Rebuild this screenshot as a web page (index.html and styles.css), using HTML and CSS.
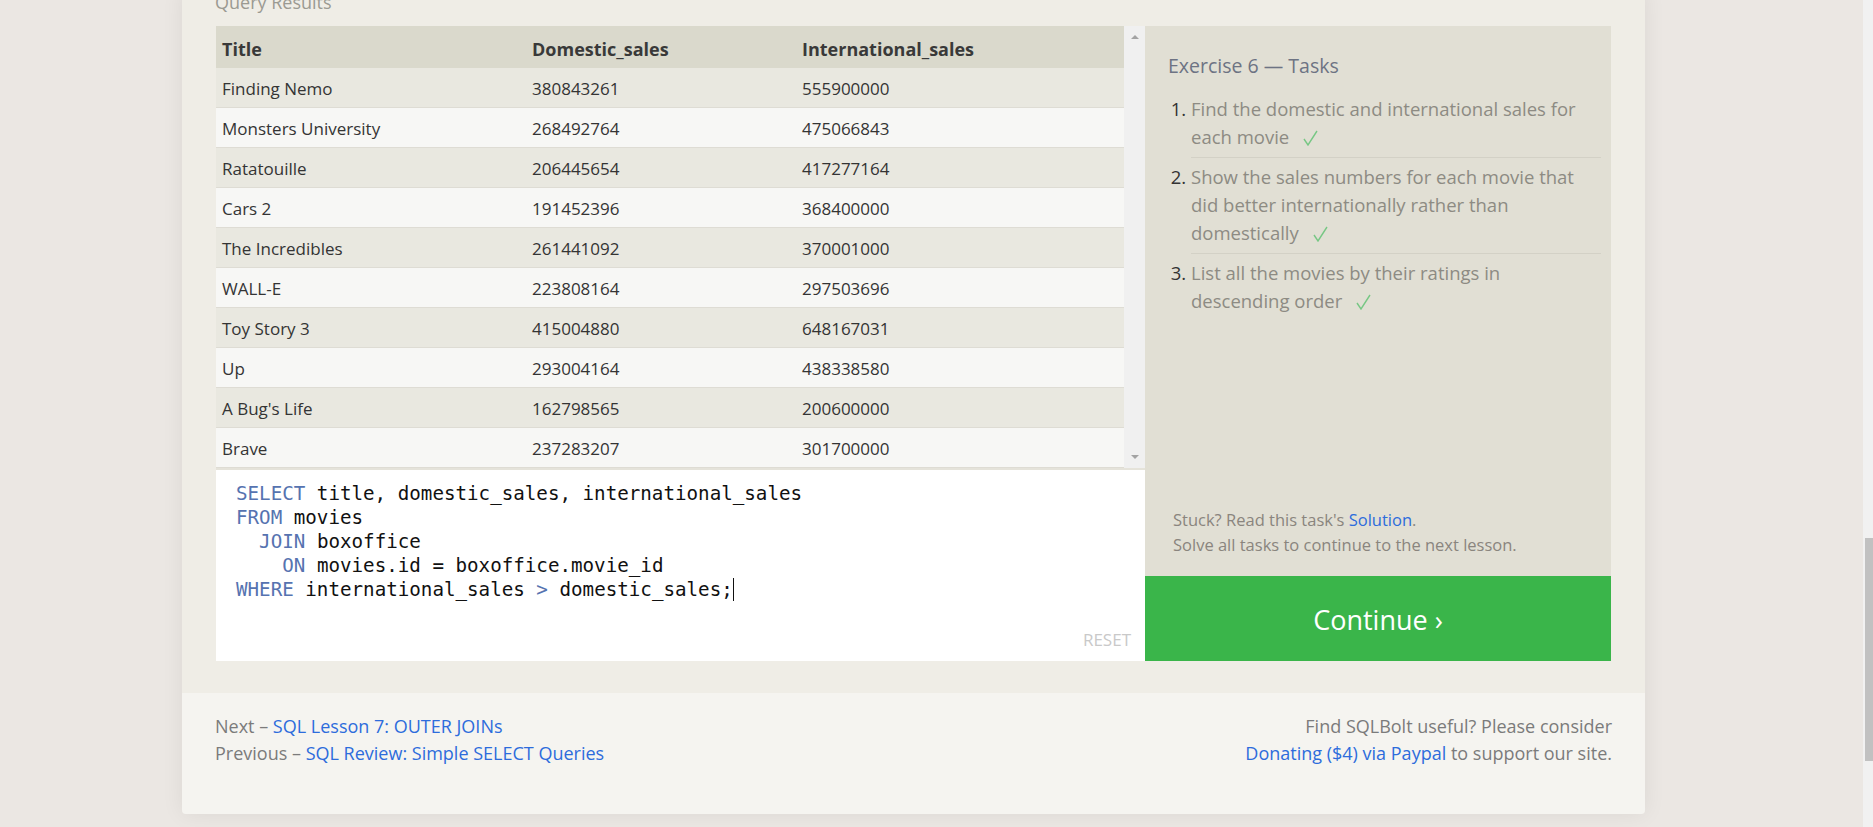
FILE: index.html
```html
<!DOCTYPE html>
<html lang="en">
<head>
<meta charset="utf-8">
<title>SQLBolt - Exercise 6</title>
<link rel="stylesheet" href="styles.css">
</head>
<body>
<div class="lesson">
  <section class="exercise">
    <div class="results-label">Query Results</div>
    <div class="exercise-row">
      <div class="work-col">
        <div class="results">
          <table class="results-table">
            <colgroup><col class="c-title"><col class="c-dom"><col class="c-int"></colgroup>
            <thead>
              <tr><th>Title</th><th>Domestic_sales</th><th>International_sales</th></tr>
            </thead>
            <tbody>
              <tr><td>Finding Nemo</td><td>380843261</td><td>555900000</td></tr>
              <tr><td>Monsters University</td><td>268492764</td><td>475066843</td></tr>
              <tr><td>Ratatouille</td><td>206445654</td><td>417277164</td></tr>
              <tr><td>Cars 2</td><td>191452396</td><td>368400000</td></tr>
              <tr><td>The Incredibles</td><td>261441092</td><td>370001000</td></tr>
              <tr><td>WALL-E</td><td>223808164</td><td>297503696</td></tr>
              <tr><td>Toy Story 3</td><td>415004880</td><td>648167031</td></tr>
              <tr><td>Up</td><td>293004164</td><td>438338580</td></tr>
              <tr><td>A Bug's Life</td><td>162798565</td><td>200600000</td></tr>
              <tr><td>Brave</td><td>237283207</td><td>301700000</td></tr>
            </tbody>
          </table>
          <div class="vscroll"><span class="arrow arrow-up"></span><span class="arrow arrow-down"></span></div>
        </div>
        <div class="editor">
          <div class="code">
            <div class="code-line"><span class="kw">SELECT</span> title, domestic_sales, international_sales</div>
            <div class="code-line"><span class="kw">FROM</span> movies</div>
            <div class="code-line">  <span class="kw">JOIN</span> boxoffice</div>
            <div class="code-line">    <span class="kw">ON</span> movies.id = boxoffice.movie_id</div>
            <div class="code-line"><span class="kw">WHERE</span> international_sales <span class="kw">&gt;</span> domestic_sales;<span class="cursor"></span></div>
          </div>
          <span class="reset">RESET</span>
        </div>
      </div>
      <div class="task-col">
        <div class="tasks">
          <h3 class="tasks-title">Exercise 6 — Tasks</h3>
          <ol class="task-list">
            <li>Find the domestic and international sales for each movie<svg class="check" width="15" height="16" viewBox="0 0 15 16"><polyline points="1,9 5,15 14,1" fill="none" stroke="#77c784" stroke-width="1.4"/></svg></li>
            <li>Show the sales numbers for each movie that did better internationally rather than domestically<svg class="check" width="15" height="16" viewBox="0 0 15 16"><polyline points="1,9 5,15 14,1" fill="none" stroke="#77c784" stroke-width="1.4"/></svg></li>
            <li class="last">List all the movies by their ratings in descending order<svg class="check" width="15" height="16" viewBox="0 0 15 16"><polyline points="1,9 5,15 14,1" fill="none" stroke="#77c784" stroke-width="1.4"/></svg></li>
          </ol>
          <div class="stuck">
            <div>Stuck? Read this task's <a class="link" href="#">Solution</a>.</div>
            <div>Solve all tasks to continue to the next lesson.</div>
          </div>
        </div>
        <a class="continue" href="#">Continue ›</a>
      </div>
    </div>
  </section>
  <footer class="lesson-footer">
    <div class="nav-links">
      <div>Next – <a class="link" href="#">SQL Lesson 7: OUTER JOINs</a></div>
      <div>Previous – <a class="link" href="#">SQL Review: Simple SELECT Queries</a></div>
    </div>
    <div class="donate">
      <div>Find SQLBolt useful? Please consider</div>
      <div><a class="link" href="#">Donating ($4) via Paypal</a> to support our site.</div>
    </div>
  </footer>
</div>
<div class="page-scrollbar"><div class="page-thumb"></div></div>
</body>
</html>
```

FILE: styles.css
```css
html, body {
  margin: 0;
  padding: 0;
  height: 100%;
  overflow: hidden;
}

body {
  background: #ebe7e3;
  font-family: "Open Sans", "Noto Sans", sans-serif;
  color: #333;
}

.lesson {
  margin-left: 182px;
  width: 1463px;
  box-shadow: 0 0 22px rgba(0, 0, 0, 0.07);
  border-radius: 0 0 4px 4px;
}

.exercise {
  background: #efede6;
  padding: 0 34px 32px 34px;
}

.results-label {
  font-size: 18px;
  line-height: 24px;
  color: #9b9a92;
  margin: -10px 0 12px -1px;
}

.exercise-row {
  display: flex;
}

.work-col {
  width: 929px;
  display: flex;
  flex-direction: column;
}

.results {
  display: flex;
  height: 442px;
}

.results-table {
  width: 908px;
  table-layout: fixed;
  border-collapse: collapse;
  font-size: 17px;
}

.c-title { width: 310px; }
.c-dom { width: 270px; }
.c-int { width: 328px; }

.results-table th {
  background: #dad9cc;
  height: 42px;
  box-sizing: border-box;
  padding: 3px 0 0 6px;
  text-align: left;
  font-weight: 700;
  font-size: 18px;
  color: #393939;
}

.results-table td {
  height: 39px;
  box-sizing: border-box;
  padding: 2px 0 0 6px;
  border-bottom: 1px solid #dedcd4;
  color: #343434;
}

.results-table tbody tr:nth-child(odd) td {
  background: #e9e8e0;
}

.results-table tbody tr:nth-child(even) td {
  background: #f7f7f5;
}

.vscroll {
  width: 21px;
  background: #f0f0f0;
  display: flex;
  flex-direction: column;
  align-items: center;
  justify-content: space-between;
  padding: 9px 0;
  box-sizing: border-box;
}

.arrow {
  width: 0;
  height: 0;
  border-left: 4.5px solid transparent;
  border-right: 4.5px solid transparent;
}

.arrow-up {
  border-bottom: 4.5px solid #a3a3a3;
}

.arrow-down {
  border-top: 4.5px solid #a3a3a3;
}

.editor {
  background: #fff;
  border-top: 2px solid #e5e3da;
  display: flex;
  flex-direction: column;
  padding: 12px 14px 9px 20px;
  height: 170px;
}

.code {
  font-family: "DejaVu Sans Mono", "Liberation Mono", monospace;
  font-size: 19.2px;
  line-height: 24px;
  color: #111;
}

.code-line {
  white-space: pre;
  height: 24px;
}

.kw {
  color: #5673b0;
}

.cursor {
  display: inline-block;
  width: 0;
  height: 23px;
  border-left: 1.6px solid #111;
  vertical-align: -5px;
}

.reset {
  margin-top: auto;
  align-self: flex-end;
  font-size: 17px;
  line-height: 24px;
  color: #c9c9c9;
}

.task-col {
  width: 466px;
  display: flex;
  flex-direction: column;
}

.tasks {
  background: #e1dfd4;
  height: 550px;
  box-sizing: border-box;
  padding: 26px 10px 0 23px;
  display: flex;
  flex-direction: column;
}

.tasks-title {
  margin: 0;
  font-size: 19.5px;
  line-height: 28px;
  font-weight: 400;
  color: #6d7383;
}

.task-list {
  margin: 10px 0 0 0;
  padding: 0 0 0 23px;
  font-size: 18.5px;
  line-height: 28px;
  color: #8d8b83;
}

.task-list li {
  padding: 5px 0 6px 0;
  border-bottom: 1px solid #d3d1c6;
}

.task-list li.last {
  border-bottom: none;
}

.task-list li::marker {
  color: #333;
}

.check {
  margin-left: 14px;
  vertical-align: -2px;
}

.stuck {
  margin-top: auto;
  margin-bottom: 19px;
  padding-left: 5px;
  font-size: 16.5px;
  line-height: 25px;
  color: #8a857e;
}

.link {
  color: #2d6cdc;
  text-decoration: none;
}

.continue {
  display: flex;
  align-items: center;
  justify-content: center;
  height: 85px;
  background: #3ab54a;
  color: #fff;
  font-size: 27px;
  text-decoration: none;
  padding-top: 2px;
  box-sizing: border-box;
}

.lesson-footer {
  background: #f5f4f0;
  height: 121px;
  box-sizing: border-box;
  padding: 20px 33px 0 33px;
  display: flex;
  justify-content: space-between;
  font-size: 18px;
  line-height: 27px;
  color: #7b7b7b;
  border-radius: 0 0 4px 4px;
}

.donate {
  text-align: right;
}

.page-scrollbar {
  position: fixed;
  top: 0;
  right: 0;
  width: 10px;
  height: 100%;
  background: #f1f1f1;
}

.page-thumb {
  position: absolute;
  top: 538px;
  left: 2px;
  right: 0;
  height: 223px;
  background: #c1c1c1;
}
```
